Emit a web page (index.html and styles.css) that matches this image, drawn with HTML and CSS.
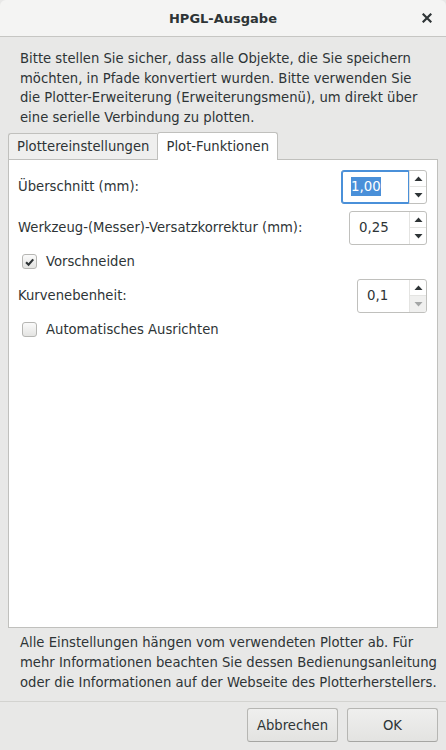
FILE: index.html
```html
<!DOCTYPE html>
<html lang="de">
<head>
<meta charset="utf-8">
<title>HPGL-Ausgabe</title>
<link rel="stylesheet" href="styles.css">
</head>
<body>
<div class="window">
  <header class="titlebar">
    <span class="title">HPGL-Ausgabe</span>
    <button class="close" aria-label="Schließen">
      <svg width="10" height="10" viewBox="0 0 10 10"><path d="M1.5 1.5 L8.5 8.5 M8.5 1.5 L1.5 8.5" stroke="#2e3436" stroke-width="2.2" stroke-linecap="square"/></svg>
    </button>
  </header>
  <main class="content">
    <p class="intro">Bitte stellen Sie sicher, dass alle Objekte, die Sie speichern<br>möchten, in Pfade konvertiert wurden. Bitte verwenden Sie<br>die Plotter-Erweiterung (Erweiterungsmenü), um direkt über<br>eine serielle Verbindung zu plotten.</p>
    <div class="notebook">
      <div class="tabs">
        <div class="tab">Plottereinstellungen</div>
        <div class="tab active">Plot-Funktionen</div>
        <div class="tab-fill"></div>
      </div>
      <div class="page">
        <div class="row">
          <span class="label">Überschnitt (mm):</span>
          <div class="spin focused w86">
            <div class="entry"><span class="sel">1,00</span></div>
            <div class="btns">
              <span class="sbtn"><svg width="9" height="5" viewBox="0 0 9 5"><path d="M0.5 5 L4.5 0.5 L8.5 5 Z" fill="#2e3436"/></svg></span>
              <span class="sbtn"><svg width="9" height="5" viewBox="0 0 9 5"><path d="M0.5 0 L4.5 4.5 L8.5 0 Z" fill="#2e3436"/></svg></span>
            </div>
          </div>
        </div>
        <div class="row">
          <span class="label">Werkzeug-(Messer)-Versatzkorrektur (mm):</span>
          <div class="spin w78">
            <div class="entry">0,25</div>
            <div class="btns">
              <span class="sbtn"><svg width="9" height="5" viewBox="0 0 9 5"><path d="M0.5 5 L4.5 0.5 L8.5 5 Z" fill="#2e3436"/></svg></span>
              <span class="sbtn"><svg width="9" height="5" viewBox="0 0 9 5"><path d="M0.5 0 L4.5 4.5 L8.5 0 Z" fill="#2e3436"/></svg></span>
            </div>
          </div>
        </div>
        <label class="check-row">
          <span class="checkbox checked"><svg width="14" height="14" viewBox="0 0 14 14"><path d="M3.3 7.2 L6 9.9 L11 4.2" fill="none" stroke="#2e3436" stroke-width="2.3"/></svg></span>
          <span>Vorschneiden</span>
        </label>
        <div class="row">
          <span class="label">Kurvenebenheit:</span>
          <div class="spin w70">
            <div class="entry">0,1</div>
            <div class="btns">
              <span class="sbtn"><svg width="9" height="5" viewBox="0 0 9 5"><path d="M0.5 5 L4.5 0.5 L8.5 5 Z" fill="#2e3436"/></svg></span>
              <span class="sbtn disabled"><svg width="9" height="5" viewBox="0 0 9 5"><path d="M0.5 0 L4.5 4.5 L8.5 0 Z" fill="#a4a6a6"/></svg></span>
            </div>
          </div>
        </div>
        <label class="check-row">
          <span class="checkbox"></span>
          <span>Automatisches Ausrichten</span>
        </label>
      </div>
    </div>
    <p class="note">Alle Einstellungen hängen vom verwendeten Plotter ab. Für mehr Informationen beachten Sie dessen Bedienungsanleitung oder die Informationen auf der Webseite des Plotterherstellers.</p>
  </main>
  <footer class="actions">
    <button class="btn">Abbrechen</button>
    <button class="btn">OK</button>
  </footer>
</div>
</body>
</html>
```
FILE: styles.css
```css
* { box-sizing: border-box; }
html, body { margin: 0; padding: 0; }
body {
  width: 446px;
  height: 750px;
  background: #e8e8e7;
  font-family: "DejaVu Sans", sans-serif;
  font-size: 13.2px;
  color: #2e3436;
  overflow: hidden;
}
.window {
  height: 750px;
  display: flex;
  flex-direction: column;
}
.titlebar {
  height: 37px;
  flex: none;
  background: #f4f4f3;
  border-bottom: 1px solid #c6c6c3;
  border-radius: 6px 6px 0 0;
  display: flex;
  align-items: center;
  justify-content: center;
  position: relative;
}
.title {
  font-weight: bold;
  font-size: 13px;
}
.close {
  position: absolute;
  right: 10px;
  top: 9px;
  width: 18px;
  height: 18px;
  border: 0;
  background: none;
  padding: 0;
  display: flex;
  align-items: center;
  justify-content: center;
}
.content {
  flex: 1;
  display: flex;
  flex-direction: column;
  padding: 12px 8px 8px 8px;
}
.intro {
  margin: 0 -6px 0 12px;
  line-height: 19.7px;
  white-space: nowrap;
}
.note {
  margin: 5px -6px 0 12px;
  line-height: 20px;
}
.notebook {
  margin-top: 4px;
  flex: 1;
  display: flex;
  flex-direction: column;
}
.tabs {
  display: flex;
  align-items: flex-end;
  height: 28px;
}
.tab {
  height: 27px;
  padding: 0 8px;
  display: flex;
  align-items: center;
  background: #efefee;
  border: 1px solid #c0c0bd;
  border-right: 0;
  border-radius: 3px 0 0 0;
}
.tab.active {
  height: 29px;
  margin-bottom: -1px;
  padding-bottom: 1px;
  background: #fff;
  border-right: 1px solid #c0c0bd;
  border-bottom: 0;
  border-radius: 3px 3px 0 0;
}
.tab-fill {
  flex: 1;
  border-bottom: 1px solid #c0c0bd;
}
.page {
  flex: 1;
  background: #fff;
  border: 1px solid #c0c0bd;
  border-top: 0;
  padding: 10px 10px 0 9px;
  display: flex;
  flex-direction: column;
  gap: 7px;
}
.row {
  display: flex;
  align-items: center;
  justify-content: space-between;
  height: 34px;
}
.spin {
  display: flex;
  height: 34px;
  border: 1px solid #c0c0bd;
  border-radius: 3px;
  background: #fff;
}
.w86 { width: 86px; }
.w78 { width: 78px; }
.w70 { width: 70px; }
.entry {
  flex: 1;
  display: flex;
  align-items: center;
  padding-left: 9px;
  font-size: 13.33px;
}
.spin.focused .entry {
  margin: -1px 0 -1px -1px;
  border: 1px solid #4a90d9;
  border-radius: 3px 0 0 3px;
  box-shadow: inset 1px 0 0 #4a90d9, inset 0 1px 0 #4a90d9, inset 0 -1px 0 #4a90d9;
  padding-left: 9px;
}
.sel {
  background: #4a90d9;
  color: #fff;
  line-height: 19px;
}
.btns {
  width: 17px;
  display: flex;
  flex-direction: column;
  border-left: 1px solid #e4e4e2;
}
.sbtn {
  flex: 1;
  display: flex;
  align-items: center;
  justify-content: center;
}
.sbtn + .sbtn { border-top: 1px solid #e4e4e2; }
.sbtn.disabled {
  background: #f0f0ef;
  border-radius: 0 0 2px 0;
}
.check-row {
  height: 20px;
  display: flex;
  align-items: center;
  gap: 9px;
  padding-left: 4px;
}
.checkbox {
  width: 15px;
  height: 15px;
  border: 1px solid #b6b6b3;
  border-radius: 3px;
  background: linear-gradient(#fafafa, #e4e4e2);
  display: flex;
  align-items: center;
  justify-content: center;
}
.checkbox svg { display: block; }
.actions {
  flex: none;
  height: 49px;
  border-top: 1px solid #d3d3d0;
  display: flex;
  justify-content: flex-end;
  gap: 9px;
  padding: 6px 8px 8px 0;
}
.btn {
  width: 91px;
  height: 34px;
  font: inherit;
  color: #2e3436;
  background: linear-gradient(#efefee, #e3e3e1);
  border: 1px solid #b6b6b3;
  border-bottom-color: #a6a6a3;
  border-radius: 3px;
  padding: 0;
}
```
